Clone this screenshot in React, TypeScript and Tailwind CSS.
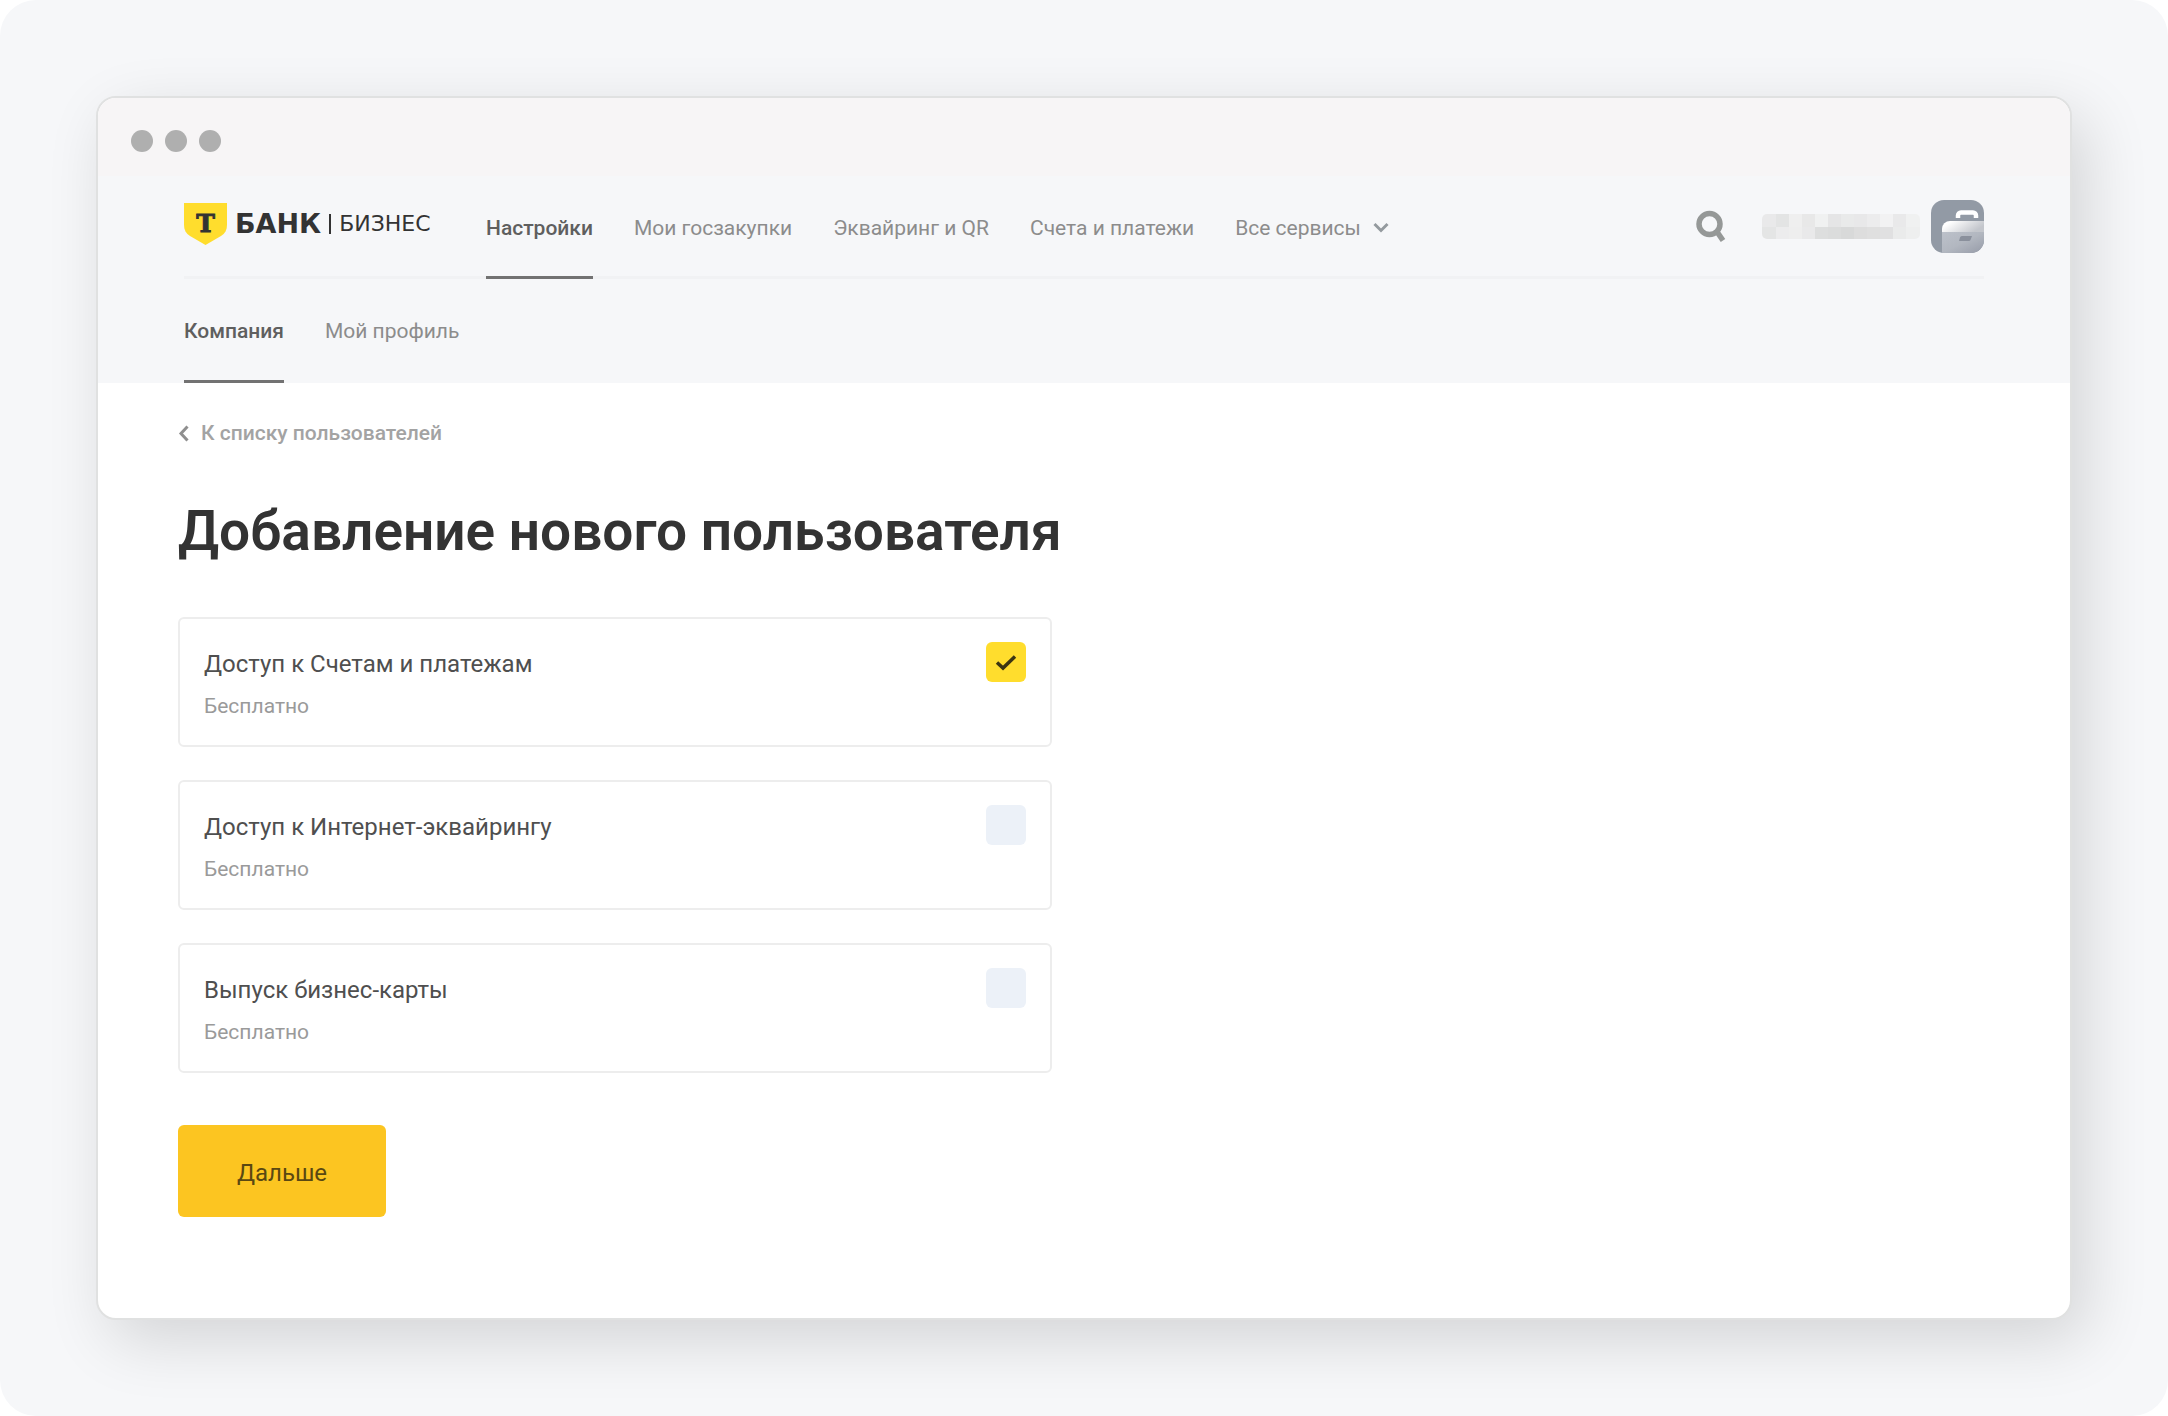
import { useState } from "react";
import clsx from "clsx";

const mainNav = ["Настройки", "Мои госзакупки", "Эквайринг и QR", "Счета и платежи"];
const subNav = ["Компания", "Мой профиль"];

const services = [
    { id: "accounts", title: "Доступ к Счетам и платежам", price: "Бесплатно" },
    { id: "acquiring", title: "Доступ к Интернет-эквайрингу", price: "Бесплатно" },
    { id: "card", title: "Выпуск бизнес-карты", price: "Бесплатно" },
];

// hidden user name, two rows of tiles
const tiles = [
    ["#e9e9ea", "#e3e4e4", "#efefef", "#e8e8e8", "#f0f1f1", "#e5e5e6", "#e9eaea", "#e8e8e9", "#ececed", "#f2f2f3", "#e9e9ea", "#f0f1f1"],
    ["#e4e5e5", "#ececed", "#eeeeee", "#e9e9ea", "#dddede", "#dbdcdc", "#d8d9d9", "#dddddd", "#dfdfdf", "#e0e0e1", "#eaebeb", "#eeefef"],
];

const Logo = () => (
    <a href="#" aria-label="Т-Банк Бизнес" className="flex items-center text-[#333333] w-[302px] shrink-0 pb-1">
        <svg width="43" height="42" viewBox="0 0 43 42" className="mr-2 shrink-0">
            <path d="M0 0h43v22c0 5-2 8.500-6 11L21.500 42 6 33c-4-2.500-6-6-6-11z" fill="#ffdd2d" />
            <text x="21.500" y="29" textAnchor="middle" fontSize="25" fontWeight="700" fill="#333333" stroke="#333333" strokeWidth="1" className="font-['DejaVu_Serif',serif]">Т</text>
        </svg>
        <span className="text-[27px] leading-8 font-bold font-['DejaVu_Sans',sans-serif]">БАНК</span>
        <span className="w-0.5 h-5 bg-[#333333] mx-2"></span>
        <span className="text-[22px] leading-8 font-['DejaVu_Sans',sans-serif]">БИЗНЕС</span>
    </a>
);

const NavLink = ({ label, active }: { label: string; active: boolean }) => (
    <a
        href="#"
        aria-current={active ? "page" : undefined}
        className={clsx(
            "flex items-center border-b-[3px] pt-[3px] whitespace-nowrap",
            active ? "border-[#727272] text-[#5f5f5f] font-medium" : "border-transparent text-[#8c8c8c]"
        )}
    >
        {label}
    </a>
);

const UserName = () => (
    <svg width="158" height="25" viewBox="0 0 158 25">
        <clipPath id="name-clip"><rect width="158" height="25" rx="5" /></clipPath>
        <g clipPath="url(#name-clip)" shapeRendering="crispEdges">
            {tiles.map((row, y) => row.map((fill, x) => (
                <rect key={`${x}-${y}`} x={x * 13 + (x ? 1 : 0)} y={y * 13} width="14" height="13" fill={fill} />
            )))}
        </g>
    </svg>
);

const Avatar = () => (
    <svg width="53" height="53" viewBox="0 0 53 53">
        <defs>
            <clipPath id="avatar-clip"><rect width="53" height="53" rx="13" /></clipPath>
            <linearGradient id="lid" x1="0" y1="0" x2="1" y2="0.4">
                <stop offset="0.2" stopColor="#ffffff" />
                <stop offset="1" stopColor="#c3c6cc" />
            </linearGradient>
            <linearGradient id="case" x1="0" y1="0" x2="1" y2="1">
                <stop offset="0" stopColor="#bcc1ca" />
                <stop offset="0.5" stopColor="#b2b7c0" />
                <stop offset="1" stopColor="#969ba8" />
            </linearGradient>
        </defs>
        <g clipPath="url(#avatar-clip)">
            <rect width="53" height="53" fill="#929aa5" />
            <path d="M27 18v-2.500a3 3 0 0 1 3-3h12a3 3 0 0 1 3 3V18" fill="none" stroke="#ffffff" strokeWidth="4.500" />
            <path d="M11 32v-3a8 8 0 0 1 8-8h34v11z" fill="url(#lid)" />
            <path d="M11 32h42v21H11z" fill="url(#case)" />
            <path d="M31 36h10l-1.500 4a2 2 0 0 1-1.500 1H28l1-3.500a2 2 0 0 1 2-1.500z" fill="#8a909c" />
        </g>
    </svg>
);

const App = () => {
    const [selected, setSelected] = useState<string[]>(["accounts"]);

    const toggle = (id: string) => {
        setSelected((prev) => (prev.includes(id) ? prev.filter((s) => s !== id) : [...prev, id]));
    };

    return (
        <div className="bg-white font-[Roboto,sans-serif]">
            <div className="min-h-screen flex bg-[#f6f7f9] rounded-[36px] p-24">
                <div className="flex-1 flex flex-col bg-white border-2 border-[#e0e1e1] rounded-[20px] overflow-hidden shadow-[14px_20px_64px_rgba(0,0,0,0.14)]">
                    {/* Window bar */}
                    <div className="flex items-center gap-3 h-[78px] pt-2 px-[33px] bg-[#f7f5f6]">
                        <span className="size-[22px] rounded-full bg-[#afafaf]"></span>
                        <span className="size-[22px] rounded-full bg-[#afafaf]"></span>
                        <span className="size-[22px] rounded-full bg-[#afafaf]"></span>
                    </div>

                    <header className="bg-[#f6f7f9] px-[86px] text-[21px] leading-7">
                        <div className="flex items-center h-[103px] border-b-[3px] border-[#f1f2f4]">
                            <Logo />
                            <nav className="flex self-stretch gap-[41px] -mb-[3px]">
                                {mainNav.map((label, i) => <NavLink key={label} label={label} active={i === 0} />)}
                                <button type="button" className="flex items-center gap-3 text-[#8c8c8c] whitespace-nowrap">
                                    Все сервисы
                                    <svg width="16" height="11" viewBox="0 0 16 11" fill="none" stroke="#949a9f" strokeWidth="3">
                                        <path d="M1.500 2 8 8.500 14.500 2" />
                                    </svg>
                                </button>
                            </nav>
                            <div className="ml-auto flex items-center">
                                <button type="button" aria-label="Поиск" className="mr-9">
                                    <svg width="30" height="33" viewBox="0 0 30 33" fill="none" stroke="#959897">
                                        <circle cx="13.500" cy="14" r="10.500" strokeWidth="5.500" />
                                        <path d="M21.500 22.500 27 30.500" strokeWidth="5.500" />
                                    </svg>
                                </button>
                                <button type="button" aria-label="Профиль" className="flex items-center gap-[11px]">
                                    <UserName />
                                    <Avatar />
                                </button>
                            </div>
                        </div>
                        <nav className="flex gap-[41px] h-[104px]">
                            {subNav.map((label, i) => <NavLink key={label} label={label} active={i === 0} />)}
                        </nav>
                    </header>

                    <main className="px-20 pt-9 pb-24">
                        <a href="#" className="inline-flex items-center gap-3 text-[21px] leading-7 font-medium text-[#a3a3a3]">
                            <svg width="11" height="17" viewBox="0 0 11 17" fill="none" stroke="#8f8f8f" strokeWidth="3">
                                <path d="M9.500 1.500 3 8.500l6.500 7" />
                            </svg>
                            К списку пользователей
                        </a>
                        <h1 className="mt-[50px] text-[55px] leading-16 font-semibold text-[#333333]">Добавление нового пользователя</h1>

                        <form className="mt-[54px] max-w-[874px]" onSubmit={(e) => e.preventDefault()}>
                            <div className="flex flex-col gap-[33px]">
                                {services.map((s) => (
                                    <label key={s.id} className="flex justify-between h-[130px] px-6 py-[23px] border-2 border-[#ededed] rounded-md">
                                        <span className="flex flex-col gap-3 pt-1.5">
                                            <span className="text-2xl text-[#4f4f4f]">{s.title}</span>
                                            <span className="text-[21px] leading-7 text-[#9a9a9a]">{s.price}</span>
                                        </span>
                                        <span className="grid size-10">
                                            <input
                                                type="checkbox"
                                                checked={selected.includes(s.id)}
                                                onChange={() => toggle(s.id)}
                                                className="peer col-start-1 row-start-1 size-10 appearance-none rounded-md bg-[#ecf1f8] checked:bg-[#ffdd2d]"
                                            />
                                            <svg viewBox="0 0 40 40" fill="none" stroke="#3b3512" strokeWidth="3.500" className="col-start-1 row-start-1 size-10 pointer-events-none invisible peer-checked:visible">
                                                <path d="M11 20.500 17 26 29 14.500" />
                                            </svg>
                                        </span>
                                    </label>
                                ))}
                            </div>
                            <button type="submit" className="mt-[52px] w-52 h-[92px] pt-1 rounded-md bg-[#fcc521] text-2xl text-[#5a4812]">Дальше</button>
                        </form>
                    </main>
                </div>
            </div>
        </div>
    );
};

export default App;
